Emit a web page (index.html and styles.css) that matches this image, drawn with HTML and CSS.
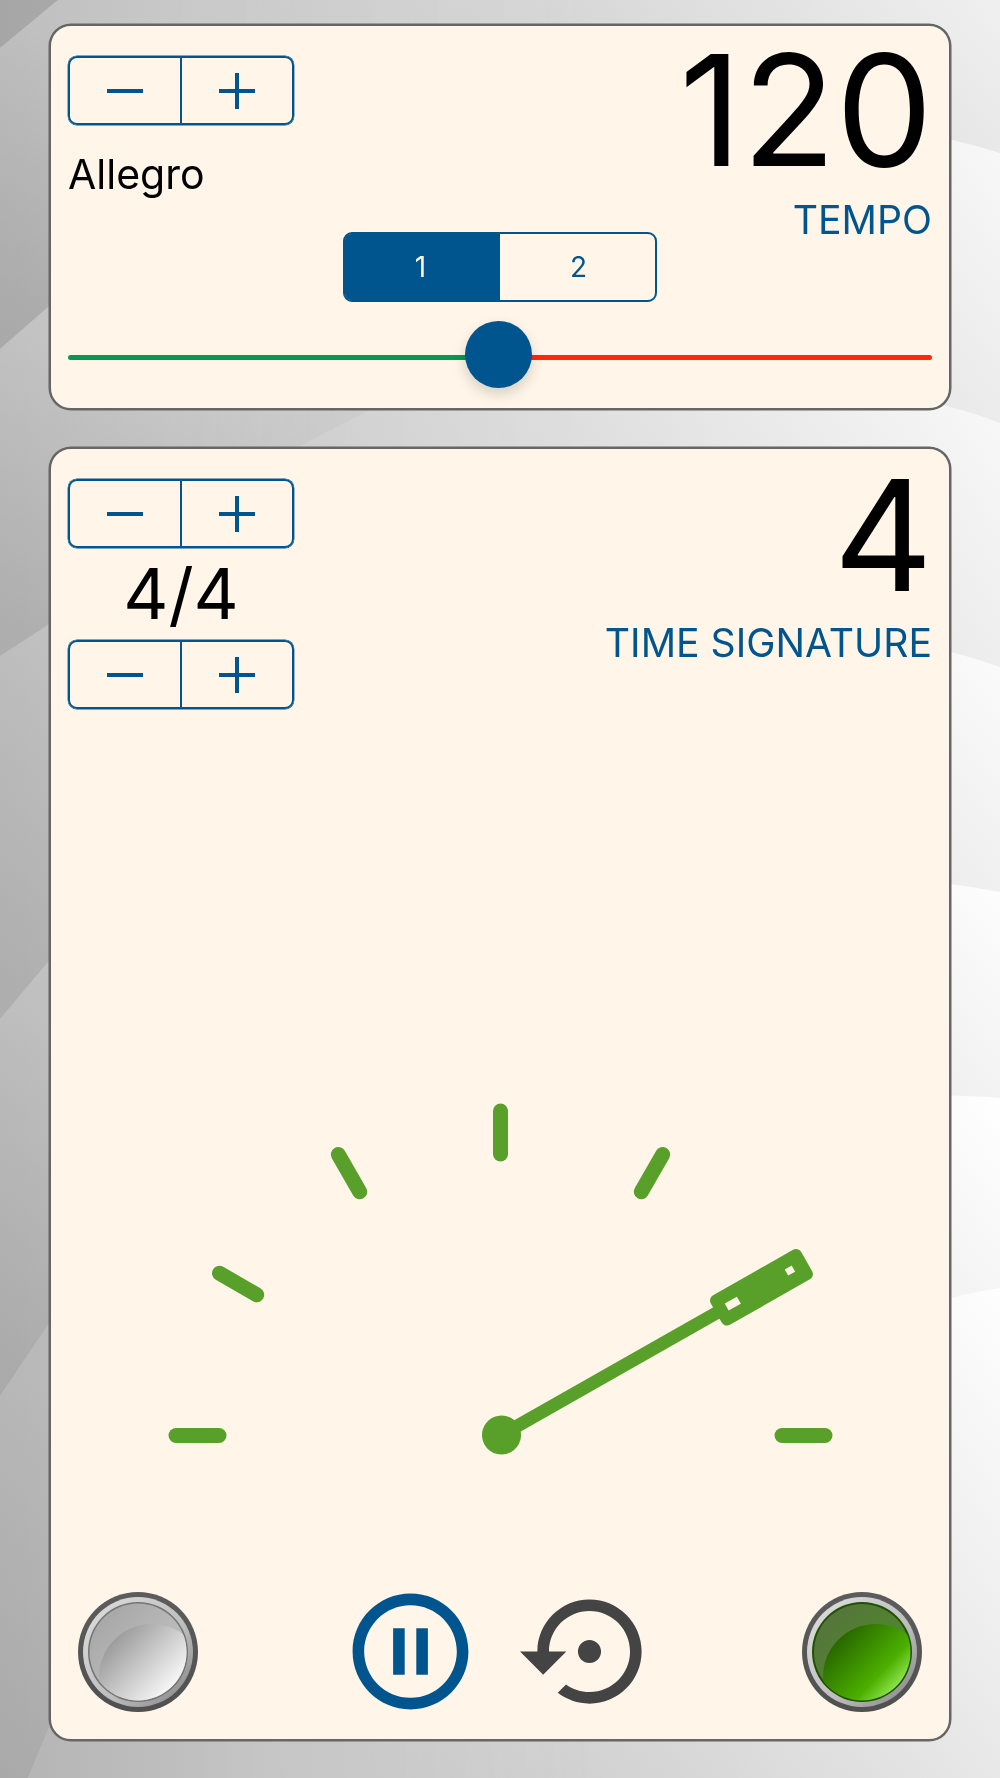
FILE: index.html
```html
<!DOCTYPE html>
<html lang="en">
<head>
    <meta charset="UTF-8">
    <meta name="viewport" content="width=device-width, initial-scale=1.0">
    <title>Metronome</title>
    <link rel="stylesheet" href="styles.css">
</head>
<body>
    <!-- background swooshes, painted behind the cards -->
    <svg class="backdrop" viewBox="0 0 1000 1778" preserveAspectRatio="none" aria-hidden="true">
        <defs>
            <linearGradient id="fade" x1="0" x2="1" y1="0" y2="0">
                <stop offset="0" stop-color="#c4c4c4"/>
                <stop offset="1" stop-color="#ffffff"/>
            </linearGradient>
            <linearGradient id="leftFade" gradientUnits="userSpaceOnUse" x1="150" x2="600" y1="0" y2="0">
                <stop offset="0" stop-color="#fff"/>
                <stop offset="1" stop-color="#000"/>
            </linearGradient>
            <mask id="leftSide" maskUnits="userSpaceOnUse" x="0" y="0" width="1000" height="1778">
                <rect width="1000" height="1778" fill="url(#leftFade)"/>
            </mask>
            <linearGradient id="l1" gradientUnits="userSpaceOnUse" x1="0" x2="0" y1="20" y2="328"><stop offset="0" stop-color="#f8f8f8"/><stop offset="1" stop-color="#dcdcdc"/></linearGradient>
            <linearGradient id="l2" gradientUnits="userSpaceOnUse" x1="0" x2="0" y1="328" y2="640"><stop offset="0" stop-color="#fcfcfc"/><stop offset="1" stop-color="#e1e1e1"/></linearGradient>
            <linearGradient id="l3" gradientUnits="userSpaceOnUse" x1="0" x2="0" y1="640" y2="990"><stop offset="0" stop-color="#f7f7f7"/><stop offset="1" stop-color="#e2e2e2"/></linearGradient>
            <linearGradient id="l4" gradientUnits="userSpaceOnUse" x1="0" x2="0" y1="990" y2="1360"><stop offset="0" stop-color="#f8f8f8"/><stop offset="1" stop-color="#dedede"/></linearGradient>
            <linearGradient id="l5" gradientUnits="userSpaceOnUse" x1="0" x2="0" y1="1360" y2="1778"><stop offset="0" stop-color="#efefef"/><stop offset="1" stop-color="#dcdcdc"/></linearGradient>
            <linearGradient id="r0" gradientUnits="userSpaceOnUse" x1="0" x2="0" y1="0" y2="143"><stop offset="0" stop-color="#f0f0f0"/><stop offset="1" stop-color="#e9e9e9"/></linearGradient>
            <linearGradient id="r1" gradientUnits="userSpaceOnUse" x1="0" x2="0" y1="143" y2="410"><stop offset="0" stop-color="#f8f8f8"/><stop offset="1" stop-color="#ececec"/></linearGradient>
            <linearGradient id="r2" gradientUnits="userSpaceOnUse" x1="0" x2="0" y1="410" y2="658"><stop offset="0" stop-color="#f8f8f8"/><stop offset="1" stop-color="#eeeeee"/></linearGradient>
            <linearGradient id="r3" gradientUnits="userSpaceOnUse" x1="0" x2="0" y1="658" y2="888"><stop offset="0" stop-color="#fbfbfb"/><stop offset="1" stop-color="#f0f0f0"/></linearGradient>
            <linearGradient id="r4" gradientUnits="userSpaceOnUse" x1="0" x2="0" y1="888" y2="1095"><stop offset="0" stop-color="#fdfdfd"/><stop offset="1" stop-color="#f3f3f3"/></linearGradient>
            <linearGradient id="r5" gradientUnits="userSpaceOnUse" x1="0" x2="0" y1="1095" y2="1290"><stop offset="0" stop-color="#ffffff"/><stop offset="1" stop-color="#f6f6f6"/></linearGradient>
            <linearGradient id="r6" gradientUnits="userSpaceOnUse" x1="0" x2="0" y1="1290" y2="1778"><stop offset="0" stop-color="#fefefe"/><stop offset="1" stop-color="#e8e8e8"/></linearGradient>
            <clipPath id="c0"><path d="M0 48L58 0H1000V1778H0Z"/></clipPath>
            <clipPath id="c1"><path d="M0 349L48 307C250 140 700 60 1000 153V1778H0Z"/></clipPath>
            <clipPath id="c2"><path d="M0 656L48 625C150 530 250 470 370 410C500 345 850 365 1000 423V1778H0Z"/></clipPath>
            <clipPath id="c3"><path d="M0 1019L48 962C250 700 700 560 1000 667V1778H0Z"/></clipPath>
            <clipPath id="c4"><path d="M0 1396L48 1325C250 1000 700 830 1000 892V1778H0Z"/></clipPath>
            <clipPath id="c5"><path d="M28 1778L48 1730C150 1450 600 1060 1000 1098V1778Z"/></clipPath>
            <clipPath id="c6"><path d="M275 1778L300 1741C450 1500 800 1320 1000 1288V1778Z"/></clipPath>
        </defs>
        <rect width="1000" height="1778" fill="url(#r0)"/>
        <rect width="1000" height="1778" fill="#d8d8d8" mask="url(#leftSide)"/>
        <g clip-path="url(#c0)"><rect width="1000" height="1778" fill="url(#r0)"/><rect width="1000" height="1778" fill="url(#l1)" mask="url(#leftSide)"/></g>
        <g clip-path="url(#c1)"><rect width="1000" height="1778" fill="url(#r1)"/><rect width="1000" height="1778" fill="url(#l2)" mask="url(#leftSide)"/></g>
        <g clip-path="url(#c2)"><rect width="1000" height="1778" fill="url(#r2)"/><rect width="1000" height="1778" fill="url(#l3)" mask="url(#leftSide)"/></g>
        <g clip-path="url(#c3)"><rect width="1000" height="1778" fill="url(#r3)"/><rect width="1000" height="1778" fill="url(#l4)" mask="url(#leftSide)"/></g>
        <g clip-path="url(#c4)"><rect width="1000" height="1778" fill="url(#r4)"/><rect width="1000" height="1778" fill="url(#l5)" mask="url(#leftSide)"/></g>
        <g clip-path="url(#c5)"><rect width="1000" height="1778" fill="url(#r5)"/><rect width="1000" height="1778" fill="#ebebeb" mask="url(#leftSide)"/></g>
        <g clip-path="url(#c6)"><rect width="1000" height="1778" fill="url(#r6)"/><rect width="1000" height="1778" fill="#f0f0f0" mask="url(#leftSide)"/></g>
        <rect class="backdrop-shade" width="1000" height="1778" fill="url(#fade)"/>
    </svg>

    <main class="page">
        <section class="card card-tempo">
            <div class="card-head">
                <div class="head-left">
                    <div class="stepper">
                        <button class="step"><svg class="step-icon" viewBox="0 0 36 36"><path d="M0 18H36"/></svg></button>
                        <button class="step"><svg class="step-icon" viewBox="0 0 36 36"><path d="M0 18H36M18 0V36"/></svg></button>
                    </div>
                    <div class="tempo-name">Allegro</div>
                </div>
                <div class="head-right">
                    <div class="reading">120</div>
                    <div class="reading-label">TEMPO</div>
                </div>
            </div>
            <div class="segments">
                <button class="segment active">1</button>
                <button class="segment">2</button>
            </div>
            <div class="slider">
                <div class="slider-track"></div>
                <div class="slider-thumb"></div>
            </div>
        </section>

        <section class="card card-meter">
            <div class="card-head meter-head">
                <div class="head-left">
                    <div class="stepper">
                        <button class="step"><svg class="step-icon" viewBox="0 0 36 36"><path d="M0 18H36"/></svg></button>
                        <button class="step"><svg class="step-icon" viewBox="0 0 36 36"><path d="M0 18H36M18 0V36"/></svg></button>
                    </div>
                    <div class="meter-value">4/4</div>
                    <div class="stepper">
                        <button class="step"><svg class="step-icon" viewBox="0 0 36 36"><path d="M0 18H36"/></svg></button>
                        <button class="step"><svg class="step-icon" viewBox="0 0 36 36"><path d="M0 18H36M18 0V36"/></svg></button>
                    </div>
                </div>
                <div class="head-right">
                    <div class="reading">4</div>
                    <div class="reading-label">TIME SIGNATURE</div>
                </div>
            </div>

            <svg class="gauge" viewBox="-432.5 -345.5 864 400" aria-hidden="true">
                <g class="gauge-ticks">
                    <path d="M-324.5 0H-281.5"/>
                    <path d="M-281 -162.2L-243.8 -140.8"/>
                    <path d="M-162.2 -281L-140.8 -243.8"/>
                    <path d="M0 -324.5V-281.5"/>
                    <path d="M162.2 -281L140.8 -243.8"/>
                    <path d="M324.5 0H281.5"/>
                </g>
                <g transform="translate(1 -0.5) rotate(-29.6)">
                    <circle class="gauge-fill" r="19.5"/>
                    <rect class="gauge-fill" y="-6.5" width="260" height="13"/>
                    <rect class="gauge-fill" x="247" y="-17" width="104" height="34" rx="6"/>
                    <rect class="gauge-hole" x="259" y="-4" width="14" height="8"/>
                    <rect class="gauge-hole" x="328" y="-4" width="8" height="7"/>
                </g>
            </svg>

            <div class="controls">
                <svg class="lamp" viewBox="0 0 120 120" aria-hidden="true">
                    <defs>
                        <linearGradient id="rim" x1="0" y1="0" x2="0" y2="1"><stop offset="0" stop-color="#5c5c5c"/><stop offset="1" stop-color="#505050"/></linearGradient>
                        <linearGradient id="bezel" x1="0" y1="0" x2="1" y2="1"><stop offset="0" stop-color="#e0e0e0"/><stop offset=".6" stop-color="#bcbcbc"/><stop offset="1" stop-color="#808080"/></linearGradient>
                        <linearGradient id="greyBase" x1="0" y1="0" x2="1" y2="1"><stop offset="0" stop-color="#a2a2a2"/><stop offset="1" stop-color="#cccccc"/></linearGradient>
                        <linearGradient id="greyGlow" x1=".12" y1=".1" x2=".72" y2=".66"><stop offset="0" stop-color="#969696"/><stop offset="1" stop-color="#fff"/></linearGradient>
                        <clipPath id="lampClip"><circle cx="60" cy="60" r="48.5"/></clipPath>
                    </defs>
                    <circle cx="60" cy="60" r="60" fill="url(#rim)"/>
                    <circle cx="60" cy="60" r="55" fill="url(#bezel)"/>
                    <circle cx="60" cy="60" r="50" fill="#747474"/>
                    <circle cx="60" cy="60" r="48.5" fill="url(#greyBase)"/>
                    <circle cx="74" cy="85" r="53" fill="url(#greyGlow)" clip-path="url(#lampClip)"/>
                </svg>

                <div class="transport">
                    <svg class="transport-icon pause" viewBox="0 0 24 24" aria-hidden="true"><path d="M9 16h2V8H9v8zm3-14C6.48 2 2 6.48 2 12s4.48 10 10 10 10-4.48 10-10S17.52 2 12 2zm0 18c-4.41 0-8-3.59-8-8s3.59-8 8-8 8 3.59 8 8-3.59 8-8 8zm1-4h2V8h-2v8z"/></svg>
                    <svg class="transport-icon restart" viewBox="0 0 24 24" aria-hidden="true"><path d="M14 12c0-1.1-.9-2-2-2s-2 .9-2 2 .9 2 2 2 2-.9 2-2zm-2-9c-4.97 0-9 4.03-9 9H0l4 4 4-4H5c0-3.87 3.13-7 7-7s7 3.13 7 7-3.13 7-7 7c-1.51 0-2.91-.49-4.06-1.3l-1.42 1.44C8.04 20.3 9.94 21 12 21c4.97 0 9-4.03 9-9s-4.03-9-9-9z"/></svg>
                </div>

                <svg class="lamp" viewBox="0 0 120 120" aria-hidden="true">
                    <defs>
                        <linearGradient id="greenBase" x1="0" y1="0" x2="1" y2="1"><stop offset="0" stop-color="#587040"/><stop offset="1" stop-color="#4a9420"/></linearGradient>
                        <linearGradient id="greenGlow" x1=".12" y1=".1" x2=".72" y2=".66"><stop offset="0" stop-color="#256000"/><stop offset=".68" stop-color="#4cb000"/><stop offset="1" stop-color="#a4f465"/></linearGradient>
                    </defs>
                    <circle cx="60" cy="60" r="60" fill="url(#rim)"/>
                    <circle cx="60" cy="60" r="55" fill="url(#bezel)"/>
                    <circle cx="60" cy="60" r="50" fill="#1f5200"/>
                    <circle cx="60" cy="60" r="48" fill="url(#greenBase)"/>
                    <circle cx="74" cy="85" r="53" fill="url(#greenGlow)" clip-path="url(#lampClip)"/>
                </svg>
            </div>
        </section>
    </main>
</body>
</html>
```

FILE: styles.css
```css
* {
    box-sizing: border-box;
}

body {
    margin: 0;
    font-family: Inter, "Liberation Sans", sans-serif;
    color: #000;
    background: #d8d8d8;
}

.backdrop {
    position: absolute;
    top: 0;
    left: 0;
    width: 1000px;
    height: 1778px;
}

.backdrop-shade {
    mix-blend-mode: multiply;
}

.page {
    position: relative;
    height: 1778px;
    padding: 24px 49px 37px;
    display: flex;
    flex-direction: column;
    gap: 37px;
}

.card {
    background: #fff6e9;
    border: 2px solid #666;
    border-radius: 22px;
    box-shadow: 0 0 0 0.5px #666;
    padding: 30px 17px 18px;
    display: flex;
    flex-direction: column;
}

.card-tempo {
    height: 386px;
}

.card-meter {
    height: 1294px;
}

.card-head {
    display: flex;
    justify-content: space-between;
    align-items: flex-start;
    height: 176px;
}

.meter-head {
    height: 611px;
}

.head-left {
    width: 226px;
}

.head-right {
    text-align: right;
}

/* minus / plus pair */
.stepper {
    display: flex;
    width: 226px;
    height: 69px;
    border: 2px solid #00558f;
    border-radius: 9px;
    box-shadow: 0 0 0 0.4px #00558f;
}

.step {
    flex: 1;
    padding: 0;
    border: none;
    background: none;
    display: flex;
    align-items: center;
    justify-content: center;
}

.step + .step {
    border-left: 2px solid #00558f;
}

.step-icon {
    width: 36px;
    height: 36px;
    fill: none;
    stroke: #00558f;
    stroke-width: 4;
}

.tempo-name {
    margin-top: 25px;
    font-size: 41px;
    line-height: 48px;
}

.meter-value {
    font-size: 70px;
    line-height: 92px;
    height: 92px;
    text-align: center;
}

.reading {
    font-size: 154px;
    line-height: 154px;
    margin-top: -23px;
    margin-right: -1px;
}

.meter-head .reading {
    margin-top: -21px;
}

.reading-label {
    margin-top: 11px;
    font-size: 39.2px;
    line-height: 44px;
    color: #00558f;
}

.meter-head .reading-label {
    margin-top: 9px;
}

.segments {
    display: flex;
    align-self: center;
    width: 314px;
    height: 70px;
    border: 2px solid #00558f;
    border-radius: 9px;
}

.segment {
    flex: 1;
    padding: 0 0 0 2px;
    border: none;
    background: none;
    color: #00558f;
    font-family: inherit;
    font-size: 28px;
}

.segment.active {
    flex: 0 0 155px;
    padding: 0 4px 0 0;
    background: #00558f;
    color: #fff6e9;
    border-radius: 6px 0 0 6px;
}

.slider {
    position: relative;
    height: 5px;
    margin-top: 53px;
}

.slider-track {
    height: 100%;
    border-radius: 3px;
    background: linear-gradient(to right, #0a9650 50%, #ff2a0a 50%);
}

.slider-thumb {
    position: absolute;
    left: 397px;
    top: -34px;
    width: 67px;
    height: 67px;
    border-radius: 50%;
    background: #00558f;
    box-shadow: 0 6px 14px rgba(0, 0, 0, 0.16);
}

.gauge {
    display: block;
    width: 864px;
    height: 400px;
}

.gauge-ticks path {
    fill: none;
    stroke: #58a02a;
    stroke-width: 15;
    stroke-linecap: round;
}

.gauge-fill {
    fill: #58a02a;
}

.gauge-hole {
    fill: #fff6e9;
}

.controls {
    margin-top: auto;
    padding: 0 10px;
    display: flex;
    justify-content: space-between;
    align-items: center;
}

.lamp {
    display: block;
    width: 120px;
    height: 120px;
}

.transport {
    display: flex;
    gap: 40px;
}

.transport-icon {
    display: block;
    width: 139px;
    height: 139px;
}

.pause {
    fill: #00558f;
}

.restart {
    fill: #444;
}
```
